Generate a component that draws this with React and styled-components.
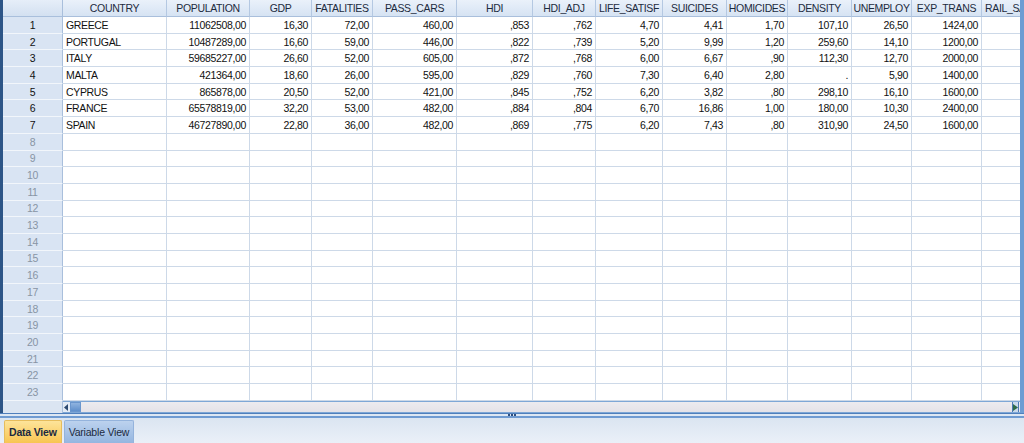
import React from "react";
import styled, { createGlobalStyle } from "styled-components";

const GlobalStyle = createGlobalStyle`
  html, body {
    margin: 0;
    padding: 0;
    background: #e4ecf6;
  }
  * {
    box-sizing: border-box;
  }
`;

const columns = [
  { name: "COUNTRY", w: 104, align: "left" },
  { name: "POPULATION", w: 83 },
  { name: "GDP", w: 62 },
  { name: "FATALITIES", w: 61 },
  { name: "PASS_CARS", w: 84 },
  { name: "HDI", w: 76 },
  { name: "HDI_ADJ", w: 63 },
  { name: "LIFE_SATISF", w: 67 },
  { name: "SUICIDES", w: 64 },
  { name: "HOMICIDES", w: 61 },
  { name: "DENSITY", w: 64 },
  { name: "UNEMPLOY", w: 60 },
  { name: "EXP_TRANS", w: 70 },
  { name: "RAIL_SA", w: 70, headAlign: "left" },
];

const data = [
  ["GREECE", "11062508,00", "16,30", "72,00", "460,00", ",853", ",762", "4,70", "4,41", "1,70", "107,10", "26,50", "1424,00", ""],
  ["PORTUGAL", "10487289,00", "16,60", "59,00", "446,00", ",822", ",739", "5,20", "9,99", "1,20", "259,60", "14,10", "1200,00", ""],
  ["ITALY", "59685227,00", "26,60", "52,00", "605,00", ",872", ",768", "6,00", "6,67", ",90", "112,30", "12,70", "2000,00", ""],
  ["MALTA", "421364,00", "18,60", "26,00", "595,00", ",829", ",760", "7,30", "6,40", "2,80", ".", "5,90", "1400,00", ""],
  ["CYPRUS", "865878,00", "20,50", "52,00", "421,00", ",845", ",752", "6,20", "3,82", ",80", "298,10", "16,10", "1600,00", ""],
  ["FRANCE", "65578819,00", "32,20", "53,00", "482,00", ",884", ",804", "6,70", "16,86", "1,00", "180,00", "10,30", "2400,00", ""],
  ["SPAIN", "46727890,00", "22,80", "36,00", "482,00", ",869", ",775", "6,20", "7,43", ",80", "310,90", "24,50", "1600,00", ""],
];

const TOTAL_ROWS = 23;

const Window = styled.div`
  width: 1024px;
  height: 443px;
  display: flex;
  flex-direction: column;
  font-family: "Liberation Sans", Arial, sans-serif;
  overflow: hidden;
`;

const Main = styled.div`
  display: flex;
  flex-direction: column;
  height: 413px;
  border-left: 3px solid #2d5587;
  border-right: 4px solid #6d9dd3;
  background: #fff;
`;

const GridClip = styled.div`
  height: 401px;
  overflow: hidden;
`;

const Grid = styled.div`
  display: grid;
  grid-template-columns: 60px ${columns.map((c) => c.w + "px").join(" ")};
  grid-template-rows: 17px;
  grid-auto-rows: 16.7px;
  width: max-content;
  font-size: 10.5px;
  letter-spacing: -0.35px;
`;

const Corner = styled.div`
  background: linear-gradient(#e6eef9, #d3e0f1);
  border-right: 1px solid #a9bfdc;
  border-bottom: 1px solid #a9bfdc;
`;

const HeadCell = styled.div`
  background: linear-gradient(#eaf1fa, #d6e3f3);
  border-right: 1px solid #b4c8e2;
  border-bottom: 1px solid #a9bfdc;
  color: #1d2b3e;
  display: flex;
  align-items: center;
  justify-content: ${({ $align }) => ($align === "left" ? "flex-start" : "center")};
  padding: 0 3px;
  white-space: nowrap;
  overflow: hidden;
`;

const RowHead = styled.div`
  background: #d9e4f3;
  border-right: 1px solid #a9bfdc;
  border-bottom: 1px solid #f2f6fb;
  color: ${({ $filled }) => ($filled ? "#111" : "#8894a4")};
  display: flex;
  align-items: center;
  justify-content: center;
`;

const Cell = styled.div`
  border-right: 1px solid #cdd9e8;
  border-bottom: 1px solid #cdd9e8;
  color: #111;
  display: flex;
  align-items: center;
  justify-content: ${({ $align }) => ($align === "left" ? "flex-start" : "flex-end")};
  padding: 0 3px;
  white-space: nowrap;
  overflow: hidden;
`;

const ScrollRow = styled.div`
  display: flex;
  height: 12px;
`;

const ScrollCorner = styled.div`
  width: 60px;
  background: #dbe5f2;
  border-right: 1px solid #a9bfdc;
`;

const Track = styled.div`
  flex: 1;
  display: flex;
  align-items: stretch;
  background: linear-gradient(#ecebef, #e4e2e8);
  border-top: 1px solid #7ea7d6;
  border-bottom: 1px solid #7ea7d6;
`;

const ArrowBtn = styled.div`
  width: 7px;
  display: flex;
  align-items: center;
  justify-content: center;
  background: ${({ $side }) => ($side === "right" ? "#c9d9ec" : "#e3ebf5")};
  border-left: ${({ $side }) => ($side === "right" ? "1px solid #4a79b4" : "none")};
  border-right: ${({ $side }) => ($side === "right" ? "1px solid #4a79b4" : "none")};
  margin-left: ${({ $side }) => ($side === "right" ? "auto" : "0")};
  margin-right: ${({ $side }) => ($side === "right" ? "1px" : "0")};
`;

const Thumb = styled.div`
  width: 11px;
  background: linear-gradient(#8fb3df, #5f8fcb);
  border: 1px solid #6a96cd;
`;

const Splitter = styled.div`
  height: 5px;
  display: flex;
  align-items: center;
  justify-content: center;
  background: #dde7f3;
  border-top: 1px solid #4f7fbc;
  border-bottom: 2px solid #6f9bd2;
`;

const Grip = styled.div`
  display: flex;
  gap: 1px;
`;

const Dot = styled.span`
  width: 2px;
  height: 2px;
  background: #2f4f7f;
`;

const TabBar = styled.div`
  flex: 1;
  display: flex;
  align-items: flex-end;
  gap: 2px;
  padding-left: 4px;
  background: linear-gradient(#dbe5f1, #eaf0f8);
`;

const Tab = styled.div`
  height: 23px;
  padding: 0 4px;
  display: flex;
  align-items: center;
  font-size: 10.5px;
  letter-spacing: -0.2px;
  border-radius: 2px 2px 0 0;
  color: #1b2a40;
  font-weight: ${({ $active }) => ($active ? "bold" : "normal")};
  background: ${({ $active }) =>
    $active
      ? "linear-gradient(#fde49a, #f8c552)"
      : "linear-gradient(#bcd2ee, #95b6e0)"};
  border: 1px solid ${({ $active }) => ($active ? "#e6bd5c" : "#94b3dc")};
  border-bottom: none;
`;

const Arrow = ({ dir }) => (
  <svg width="5" height="7" viewBox="0 0 5 7">
    {dir === "left" ? (
      <path d="M4 0 L0 3.5 L4 7 Z" fill="#2d4a70" />
    ) : (
      <path d="M0 0 L5 3.5 L0 7 Z" fill="#2d6a4a" />
    )}
  </svg>
);

export default function App() {
  const rows = Array.from({ length: TOTAL_ROWS }, (_, i) => data[i] || null);
  return (
    <>
      <GlobalStyle />
      <Window>
        <Main>
          <GridClip>
            <Grid>
              <Corner />
              {columns.map((c) => (
                <HeadCell key={c.name} $align={c.headAlign}>
                  {c.name}
                </HeadCell>
              ))}
              {rows.map((row, i) => (
                <React.Fragment key={i}>
                  <RowHead $filled={!!row}>{i + 1}</RowHead>
                  {columns.map((c, j) => (
                    <Cell key={c.name} $align={c.align}>
                      {row ? row[j] : ""}
                    </Cell>
                  ))}
                </React.Fragment>
              ))}
            </Grid>
          </GridClip>
          <ScrollRow>
            <ScrollCorner />
            <Track>
              <ArrowBtn $side="left">
                <Arrow dir="left" />
              </ArrowBtn>
              <Thumb />
              <ArrowBtn $side="right">
                <Arrow dir="right" />
              </ArrowBtn>
            </Track>
          </ScrollRow>
        </Main>
        <Splitter>
          <Grip>
            <Dot />
            <Dot />
            <Dot />
          </Grip>
        </Splitter>
        <TabBar>
          <Tab $active>Data View</Tab>
          <Tab>Variable View</Tab>
        </TabBar>
      </Window>
    </>
  );
}
